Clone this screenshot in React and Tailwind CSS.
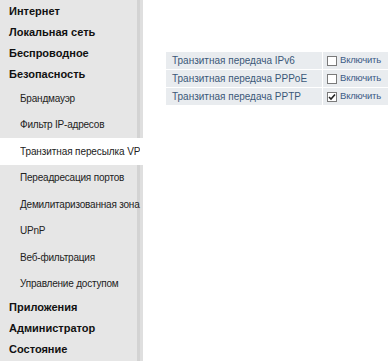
import React from 'react';

const menu = [
  { label: 'Интернет', bold: true },
  { label: 'Локальная сеть', bold: true },
  { label: 'Беспроводное', bold: true },
  { label: 'Безопасность', bold: true },
  { label: 'Брандмауэр' },
  { label: 'Фильтр IP-адресов' },
  { label: 'Транзитная пересылка VPN', active: true },
  { label: 'Переадресация портов' },
  { label: 'Демилитаризованная зона' },
  { label: 'UPnP' },
  { label: 'Веб-фильтрация' },
  { label: 'Управление доступом' },
  { label: 'Приложения', bold: true },
  { label: 'Администратор', bold: true },
  { label: 'Состояние', bold: true },
];

const rows = [
  { name: 'Транзитная передача IPv6', on: false },
  { name: 'Транзитная передача PPPoE', on: false },
  { name: 'Транзитная передача PPTP', on: true },
];

const Check = ({ on }) => (
  <span className="inline-flex items-center justify-center w-[10px] h-[10px] border border-[#7a7a7a] bg-white mr-[3px]">
    {on && (
      <svg width="8" height="8" viewBox="0 0 8 8">
        <path d="M1 4 L3 6 L7 1.5" stroke="#222" strokeWidth="1.6" fill="none" />
      </svg>
    )}
  </span>
);

const App = () => {
  return (
    <div className="flex w-[390px] h-[361px] bg-white overflow-hidden" style={{ fontFamily: '"Liberation Sans", Arial, sans-serif' }}>
      {/* Левое меню */}
      <div className="w-[143px] shrink-0 h-full overflow-hidden pt-[1px] bg-[linear-gradient(to_right,#e6e6e6_137px,#d3d3d3_137px,#d3d3d3_140px,#dfdfdf_140px)]">
        {menu.map((m) =>
          m.bold ? (
            <div key={m.label} className="h-[21px] pl-[9px] flex items-center text-[11px] font-bold text-[#111] whitespace-nowrap">
              {m.label}
            </div>
          ) : m.active ? (
            <div key={m.label} className="h-[26.5px] pl-[20px] flex items-center text-[10px] tracking-[-0.1px] text-[#222] whitespace-nowrap bg-white">
              <span className="block w-[120px] overflow-hidden">{m.label}</span>
            </div>
          ) : (
            <div key={m.label} className="h-[26.5px] pl-[20px] flex items-center text-[10px] tracking-[-0.2px] text-[#222] whitespace-nowrap">
              {m.label}
            </div>
          )
        )}
      </div>

      {/* Таблица */}
      <div className="pt-[52px] pl-[23px]">
        <div className="flex flex-col gap-[1px] w-[222px]">
          {rows.map((r) => (
            <div key={r.name} className="flex gap-[1px] h-[17px]">
              <div className="w-[156px] bg-[#e9ecef] pl-[6px] flex items-center text-[10px] text-[#3b5878] whitespace-nowrap">
                {r.name}
              </div>
              <div className="flex-1 bg-[#e9ecef] pl-[4px] flex items-center text-[9.5px] tracking-[-0.2px] text-[#3b5b86] whitespace-nowrap">
                <Check on={r.on} />
                Включить
              </div>
            </div>
          ))}
        </div>
      </div>
    </div>
  );
};

export default App;
